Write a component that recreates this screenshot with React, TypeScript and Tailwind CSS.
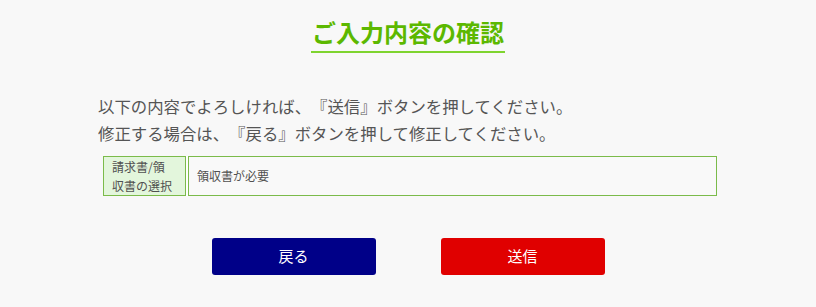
export default function App() {
  return (
    <div
      className="min-h-[307px] w-full bg-[#f8f8f8] text-[#555555] [text-spacing-trim:space-all]"
      style={{ fontFamily: '"Noto Sans CJK JP", "Noto Sans", sans-serif' }}
    >
      {/* Title */}
      <div className="pt-[16px] text-center">
        <h1 className="inline-block border-b-2 border-[#7fd42f] px-[1px] pb-[3px] text-[24px] font-bold leading-[32px] text-[#5cb800]">
          ご入力内容の確認
        </h1>
      </div>

      {/* Message */}
      <div className="ml-[98px] mt-[40px] text-[16.4px] leading-[27px]">
        <p>以下の内容でよろしければ、『送信』ボタンを押してください。</p>
        <p>修正する場合は、『戻る』ボタンを押して修正してください。</p>
      </div>

      {/* Confirm table */}
      <div className="ml-[103px] mt-[9px] flex w-[614px] gap-[2px] bg-white">
        <div className="w-[83px] border border-[#7bbb4a] bg-[#e3f6dc] px-[8px] py-[0px] text-[12px] leading-[19px] text-[#505050]">
          請求書/領
          <br />
          収書の選択
        </div>
        <div className="flex flex-1 items-center border border-[#7bbb4a] bg-[#f9f9f9] pl-[8px] text-[12px] text-[#505050]">
          領収書が必要
        </div>
      </div>

      {/* Buttons */}
      <div className="mt-[42px] flex justify-center gap-[65px] pb-[32px]">
        <button className="h-[37px] w-[164px] rounded-[3px] bg-[#000088] text-[15px] text-white">
          戻る
        </button>
        <button className="h-[37px] w-[164px] rounded-[3px] bg-[#e00000] text-[15px] text-white">
          送信
        </button>
      </div>
    </div>
  );
}
